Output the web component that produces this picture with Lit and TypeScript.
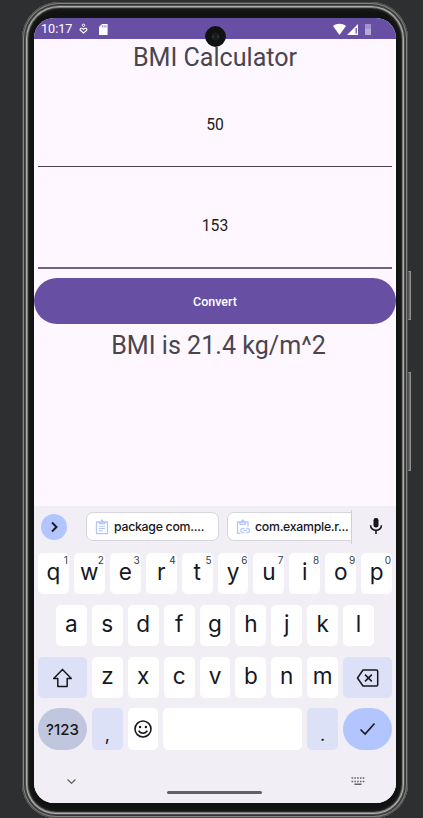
import { LitElement, html, css, svg } from "lit";
import { customElement, property } from "lit/decorators.js";

@customElement("kb-key")
class KbKey extends LitElement {
  @property() label = "";
  @property() hint = "";
  static styles = css`
    :host {
      position: relative;
      display: flex;
      align-items: center;
      justify-content: center;
      flex: 1 1 0;
      min-width: 0;
      border-radius: 5px;
      background: #fff;
      color: #17181c;
      font: 400 22.6px/28px Inter, Roboto, sans-serif;
    }
    .label { margin-top: -3px; }
    .hint {
      position: absolute;
      top: 1px;
      right: 1px;
      font-size: 10px;
      line-height: 12px;
      color: #3c3d43;
    }
  `;
  render() {
    return html`<span class="label">${this.label}</span>${this.hint
        ? html`<span class="hint">${this.hint}</span>`
        : ""}<slot></slot>`;
  }
}

@customElement("app-root")
class AppRoot extends LitElement {
  static styles = css`
    :host {
      display: block;
      width: 423px;
      height: 818px;
      overflow: hidden;
      background: #2e2f31;
      font-family: Roboto, sans-serif;
    }
    * { box-sizing: border-box; }
    svg { display: block; flex: none; }
    .stage { position: relative; height: 818px; padding: 2px 0 0 22px; }
    .device {
      width: 386px;
      height: 816px;
      padding: 16px 12px 15px;
      border-radius: 37px 37px 34px 34px;
      background: #111212;
      box-shadow:
        inset 0 0 0 1px #4b4b4b,
        inset 0 0 0 2px #858583,
        inset 0 0 0 3px #343434,
        inset 0 0 0 4px #4c4c4c,
        inset 0 0 0 5px #b0b0ae,
        inset 0 0 0 6px #777776,
        inset 0 0 0 7px #2a2a2a,
        inset 0 0 5px 7px #1f1f1f;
    }
    .side {
      position: absolute;
      left: 408px;
      width: 3px;
      border: 1px solid #929290;
      border-left-color: #555;
      background: #6b6b6a;
    }
    .power { top: 271px; height: 49px; }
    .volume { top: 372px; height: 99px; }
    .screen {
      display: flex;
      flex-direction: column;
      width: 362px;
      height: 785px;
      overflow: hidden;
      border-radius: 20px;
      background: #fef7ff;
    }
    .status {
      display: flex;
      align-items: center;
      flex: none;
      height: 21px;
      padding: 0 24px 0 7px;
      color: #fff;
      background: #6750a4;
      font-size: 12.6px;
    }
    .time { width: 38px; }
    .spacer { flex: 1; }
    .camera {
      position: absolute;
      left: 205px;
      top: 26px;
      width: 21px;
      height: 21px;
    }
    .app { flex: none; height: 467px; text-align: center; color: #1d1b20; }
    .heading { height: 36px; font-size: 25.1px; line-height: 38px; color: #49454f; }
    .field {
      margin: 0 4px;
      display: flex;
      align-items: center;
      justify-content: center;
      font-size: 15.7px;
    }
    .weight { height: 92px; padding-top: 8px; border-bottom: 1px solid #49454f; }
    .height { height: 102px; padding-top: 17px; border-bottom: 2px solid #6e6484; }
    .convert {
      display: flex;
      align-items: center;
      justify-content: center;
      width: 100%;
      height: 46px;
      margin-top: 9px;
      padding: 1px 0 0;
      border: 0;
      border-radius: 23px;
      color: #fff;
      background: #6750a4;
      font: 500 12.5px Roboto, sans-serif;
    }
    .result { height: 44px; padding-left: 7px; font-size: 25.1px; line-height: 43px; color: #49454f; }
    .keyboard {
      display: flex;
      flex-direction: column;
      flex: 1;
      background: #f1eff5;
      color: #17181c;
      font-family: Inter, Roboto, sans-serif;
    }
    .suggest { display: flex; align-items: center; height: 41px; padding: 0 12px 0 7px; }
    .more {
      display: flex;
      align-items: center;
      justify-content: center;
      width: 26px;
      height: 26px;
      margin-right: 19px;
      border-radius: 50%;
      background: #b2c5ff;
    }
    .chips { display: flex; gap: 8px; width: 266px; height: 34px; align-items: center; overflow: hidden; border-right: 1px solid #d0cfd7; }
    .chip {
      display: flex;
      align-items: center;
      flex: none;
      width: 133px;
      height: 29px;
      padding-left: 8px;
      border: 1px solid #d6d5dc;
      border-radius: 7px;
      background: #fff;
      font-size: 12.3px;
      font-weight: 500;
      letter-spacing: -0.27px;
      white-space: nowrap;
    }
    .chip svg { margin-right: 5px; }
    .mic { margin-left: 17px; }
    .keys { display: flex; flex-direction: column; gap: 11px; padding: 6px 4px 0; }
    .row { display: flex; gap: 5px; height: 41px; }
    .row.middle { padding: 0 18px; }
    .row.bottom { height: 42px; margin-top: -1px; }
    .wide { flex: 0 0 49px; }
    .tint { background: #dce1f8; }
    .pill { border-radius: 21px; }
    .numeric { background: #c0c6de; font-size: 15px; font-weight: 500; }
    .numeric span { margin-top: 1px; }
    .low { padding-top: 14px; font-size: 18px; }
    .space { flex: 0 0 139px; }
    .enter { background: #b2c5ff; }
    .nav { display: flex; align-items: center; justify-content: space-between; height: 53px; padding: 9px 31px 0 32px; }
    .handle { width: 95px; height: 3px; margin: 22px 0 0 1px; border-radius: 2px; background: #626166; }
  `;

  private icon(w: number, h: number, body: unknown, cls = "") {
    return html`<svg class=${cls} width=${w} height=${h} viewBox="0 0 ${w} ${h}" fill="none" stroke-linejoin="round">${body}</svg>`;
  }

  render() {
    return html`<div class="stage">
      <div class="device">
        <div class="screen">
          <div class="status">
            <span class="time">10:17</span>
            ${this.icon(36, 14, svg`
              <circle cx="4.5" cy="3.3" r="1.2" stroke="#fff" stroke-width="1"/>
              <path d="M4.5 11.2 1.2 8C.6 6.6 2.9 5.2 4.5 7.4 6.1 5.2 8.4 6.6 7.8 8z" stroke="#fff" stroke-width="1.1"/>
              <path d="M20 5 23 2h5.6v11H20z" fill="#fff"/>
              <path d="M23.3 3.4v2M25.1 3.4v2M26.9 3.4v2" stroke="#6750a4" stroke-width=".8"/>`)}
            <span class="spacer"></span>
            ${this.icon(39, 14, svg`
              <path d="M0 4C3.6 1 9.4 1 13 4L6.5 13z" fill="#fff"/>
              <path d="M14 13 25 2v11z" fill="#fff"/>
              <path d="M23.2 6v5.5" stroke="#6750a4" stroke-width="1.3"/>
              <path d="M32 2h6v11h-6z" fill="#a395cb"/><path d="M32 7h6v6h-6z" fill="#b6abd5"/>`)}
          </div>
          <div class="app">
            <div class="heading">BMI Calculator</div>
            <div class="field weight">50</div>
            <div class="field height">153</div>
            <button class="convert">Convert</button>
            <div class="result">BMI is 21.4 kg/m^2</div>
          </div>
          <div class="keyboard">
            <div class="suggest">
              <div class="more">${this.icon(12, 12, svg`<path d="m4 1.5 4.5 4.5L4 10.5" stroke="#17181c" stroke-width="1.9" stroke-linejoin="miter"/>`)}</div>
              <div class="chips">
                <div class="chip">${this.icon(14, 16, svg`
                  <path d="M1.5 3h11v11.7h-11zM4.5 4.7V2.8h5v1.9z" stroke="#b2c5ff" stroke-width="1.3"/>
                  <circle cx="7" cy="2" r="1.4" fill="#b2c5ff"/>
                  <path d="M4 7.3h6M4 9.5h6M4 11.7h4" stroke="#b2c5ff" stroke-width="1.1"/>`)}<span>package com....</span></div>
                <div class="chip">${this.icon(14, 16, svg`
                  <path d="M4.5 14.3h-3V3H4M9 3h3v4.5M4 5.3V3h5.2v2.3z" stroke="#b2c5ff" stroke-width="1.3"/>
                  <circle cx="6.7" cy="2" r="1.4" fill="#b2c5ff"/>
                  <path d="M8.5 9.3H7a2.2 2.2 0 0 0 0 4.4h1.5M10.3 9.3h1a2.2 2.2 0 0 1 0 4.4h-1M7.3 11.5h4" stroke="#b2c5ff" stroke-width="1.2"/>`)}<span>com.example.r...</span></div>
              </div>
              ${this.icon(14, 18, svg`
                <rect x="4.5" y="0" width="5" height="9.6" rx="2.3" fill="#17181c"/>
                <path d="M1.6 7.2a5.4 5.2 0 0 0 10.8 0M7 12.2V16" stroke="#17181c" stroke-width="1.6"/>`, "mic")}
            </div>
            <div class="keys">
              <div class="row">${[..."qwertyuiop"].map((c, i) => html`<kb-key label=${c} hint=${String((i + 1) % 10)}></kb-key>`)}</div>
              <div class="row middle">${[..."asdfghjkl"].map((c) => html`<kb-key label=${c}></kb-key>`)}</div>
              <div class="row">
                <kb-key class="wide tint">${this.icon(22, 22, svg`<path d="M10.5 2.4 1.7 11.4h4.1v8.1h9.4v-8.1h4.1z" stroke="#17181c" stroke-width="1.5"/>`)}</kb-key>
                ${[..."zxcvbnm"].map((c) => html`<kb-key label=${c}></kb-key>`)}
                <kb-key class="wide tint">${this.icon(24, 20, svg`<path d="M7 2h13.5q1.2 0 1.2 1.2v13.6q0 1.2-1.2 1.2H7L1.5 10z" stroke="#17181c" stroke-width="1.5"/><path d="m9 6.6 6.8 6.8m0-6.8L9 13.4" stroke="#17181c" stroke-width="1.5"/>`)}</kb-key>
              </div>
              <div class="row bottom">
                <kb-key class="wide pill numeric"><span>?123</span></kb-key>
                <kb-key class="tint low" label=","></kb-key>
                <kb-key>${this.icon(20, 20, svg`<circle cx="10" cy="10" r="8" stroke="#17181c" stroke-width="1.6"/><circle cx="7.1" cy="8" r="1.2" fill="#17181c"/><circle cx="12.9" cy="8" r="1.2" fill="#17181c"/><path d="M5.7 11.7c1.7 3.3 6.9 3.3 8.6 0" stroke="#17181c" stroke-width="1.5"/>`)}</kb-key>
                <kb-key class="space"></kb-key>
                <kb-key class="tint low" label="."></kb-key>
                <kb-key class="wide pill enter">${this.icon(18, 16, svg`<path d="m1.5 8.5 4.6 4.5L15.5 2.5" stroke="#17181c" stroke-width="1.6" stroke-linejoin="miter"/>`)}</kb-key>
              </div>
            </div>
            <div class="nav">
              ${this.icon(11, 7, svg`<path d="m1.5 1.5 4 3.8 4-3.8" stroke="#626166" stroke-width="1.2"/>`)}
              <div class="handle"></div>
              ${this.icon(14, 8, svg`<path d="M.5 1h13M.5 4.5h13" stroke="#626166" stroke-width="1.6" stroke-dasharray="1.6 1.2"/><path d="M3.5 7.2h7" stroke="#626166" stroke-width="1.5"/>`)}
            </div>
          </div>
        </div>
      </div>
      <svg class="camera" viewBox="0 0 21 21"><circle cx="10.5" cy="10.5" r="10.4" fill="#101111"/><circle cx="10.5" cy="10.5" r="4" fill="#1a1c1d"/><path d="M8 9.5v2M13 9.5v2" stroke="#39505c"/></svg>
      <div class="side power"></div>
      <div class="side volume"></div>
    </div>`;
  }
}
